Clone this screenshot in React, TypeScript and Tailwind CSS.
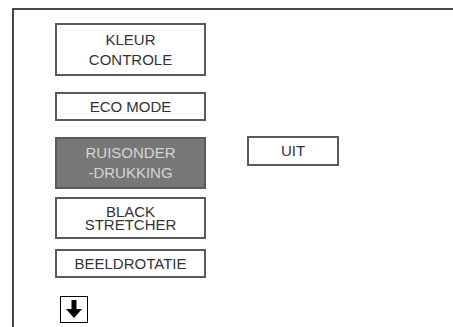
import React from 'react';

function MenuBox({ children, className }: { children: React.ReactNode; className: string }) {
  return (
    <div
      className={`w-[151px] border-2 border-[#5a5a5a] flex flex-col items-center justify-center text-center ${className}`}
    >
      {children}
    </div>
  );
}

export default function App() {
  return (
    <div
      className="w-[453px] h-[327px] bg-white overflow-hidden pt-2 pl-3"
      style={{ fontFamily: '"Liberation Sans", Arial, sans-serif' }}
    >
      <div className="h-full border-l-2 border-t-2 border-[#484848] pl-[41px] pt-[13px] text-[15px] text-[#333]">
        <MenuBox className="h-[53px] leading-[20px]">
          <span>KLEUR</span>
          <span>CONTROLE</span>
        </MenuBox>

        <MenuBox className="h-[29px] mt-4 leading-[20px]">
          <span>ECO MODE</span>
        </MenuBox>

        <div className="flex items-start mt-4">
          <MenuBox className="h-[52px] leading-[20px] bg-[#777] text-[#d6d6d6]">
            <span>RUISONDER</span>
            <span>-DRUKKING</span>
          </MenuBox>
          <div className="ml-[41px] -mt-px w-[92px] h-[30px] border-2 border-[#5a5a5a] flex items-center justify-center">
            UIT
          </div>
        </div>

        <MenuBox className="h-[42px] mt-2 leading-[13px]">
          <span>BLACK</span>
          <span>STRETCHER</span>
        </MenuBox>

        <MenuBox className="h-[29px] mt-[10px] leading-[20px]">
          <span>BEELDROTATIE</span>
        </MenuBox>

        <div className="ml-[5px] mt-[18px] w-[28px] h-[27px] border border-black flex items-center justify-center">
          <svg width="18" height="21" viewBox="0 0 18 21">
            <rect x="6.5" y="1" width="5" height="11" fill="#000" />
            <polygon points="1,10 17,10 9,19" fill="#000" />
          </svg>
        </div>
      </div>
    </div>
  );
}
